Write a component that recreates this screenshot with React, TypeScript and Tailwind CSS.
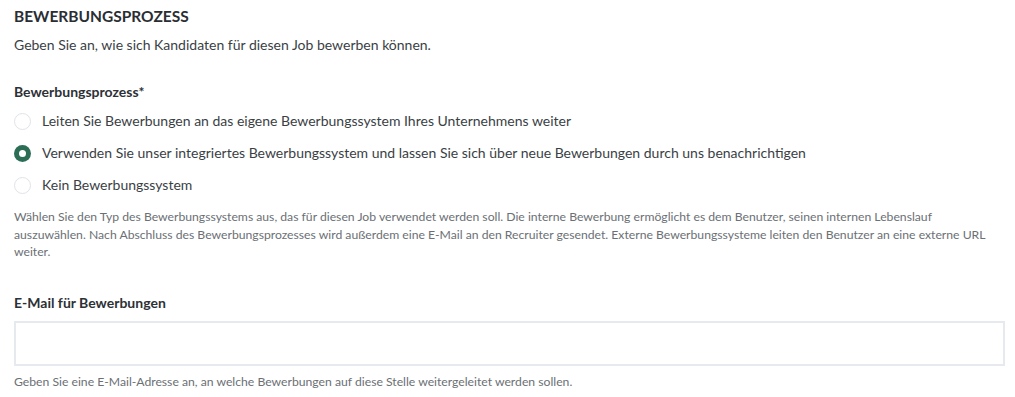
import React, { useState } from 'react';

const options = [
  'Leiten Sie Bewerbungen an das eigene Bewerbungssystem Ihres Unternehmens weiter',
  'Verwenden Sie unser integriertes Bewerbungssystem und lassen Sie sich über neue Bewerbungen durch uns benachrichtigen',
  'Kein Bewerbungssystem',
];

const Radio = ({ checked }: { checked: boolean }) => (
  <span
    className={`flex h-[17px] w-[17px] shrink-0 items-center justify-center rounded-full ${
      checked ? 'bg-[#2c6e55]' : 'border border-[#dfe3e8] bg-white'
    }`}
  >
    {checked && <span className="h-[7px] w-[7px] rounded-full bg-white" />}
  </span>
);

export default function App() {
  const [selected, setSelected] = useState(1);

  return (
    <div className="min-h-[397px] bg-white px-[14px] pt-[6px] font-['Lato',sans-serif] text-[#2d3136]">
      {/* Header */}
      <h2 className="text-[15.5px] font-bold leading-[20px] text-[#2a2e33]">BEWERBUNGSPROZESS</h2>
      <p className="mt-[9px] text-[14px] leading-[20px] text-[#3a3f45]">
        Geben Sie an, wie sich Kandidaten für diesen Job bewerben können.
      </p>

      {/* Radio group */}
      <div className="mt-[27px] text-[14px] font-bold leading-[20px]">Bewerbungsprozess*</div>
      <div className="mt-[3px] flex flex-col">
        {options.map((o, i) => (
          <label
            key={i}
            onClick={() => setSelected(i)}
            className="flex h-[32px] cursor-pointer items-center gap-[11px] text-[14px] leading-[20px] text-[#3a3f45]"
          >
            <Radio checked={selected === i} />
            <span>{o}</span>
          </label>
        ))}
      </div>
      <p className="mt-[7px] w-[988px] text-[12.2px] leading-[17.5px] text-[#6b7075]">
        Wählen Sie den Typ des Bewerbungssystems aus, das für diesen Job verwendet werden soll. Die interne
        Bewerbung ermöglicht es dem Benutzer, seinen internen Lebenslauf auszuwählen. Nach Abschluss des
        Bewerbungsprozesses wird außerdem eine E-Mail an den Recruiter gesendet. Externe Bewerbungssysteme
        leiten den Benutzer an eine externe URL weiter.
      </p>

      {/* Email */}
      <div className="mt-[32px] text-[14px] font-bold leading-[20px]">E-Mail für Bewerbungen</div>
      <input
        type="email"
        className="mt-[8px] block h-[45px] w-[991px] border-2 border-[#e6e9ee] bg-white px-3 text-[14px] outline-none"
      />
      <p className="mt-[7px] text-[12.2px] leading-[17px] text-[#6b7075]">
        Geben Sie eine E-Mail-Adresse an, an welche Bewerbungen auf diese Stelle weitergeleitet werden sollen.
      </p>
    </div>
  );
}
